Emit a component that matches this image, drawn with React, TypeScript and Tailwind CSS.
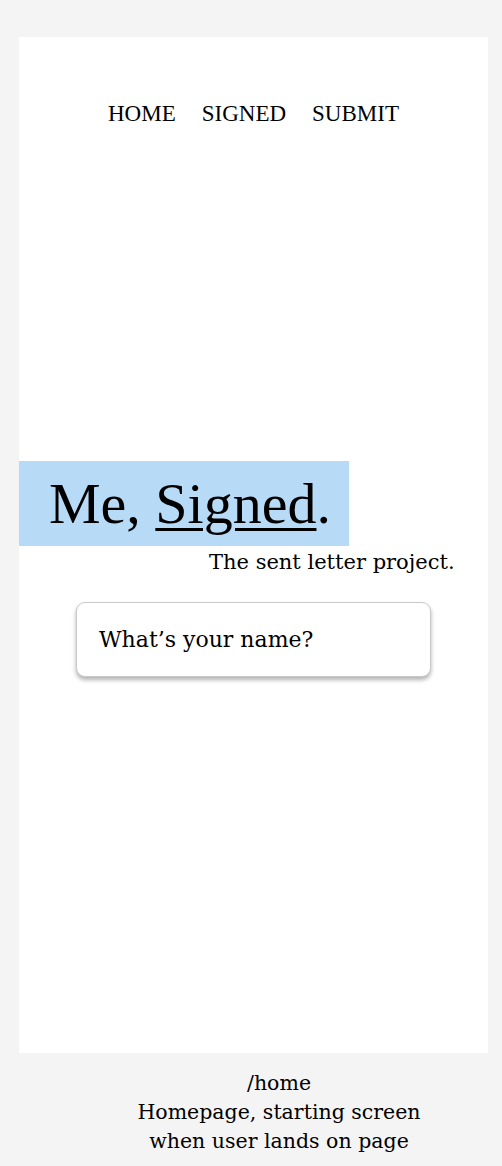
export default function App() {
  const serif = { fontFamily: '"DejaVu Serif", "Liberation Serif", serif' };
  return (
    <div className="min-h-[1166px] w-[502px] overflow-hidden bg-[#f4f4f4] pt-[37px] text-black" style={serif}>
      <div className="ml-[19px] flex h-[1016px] w-[469px] flex-col bg-white">
        <nav
          className="mt-[63px] flex justify-center gap-[26px] text-[23px] leading-[28px]"
          style={{ fontFamily: '"Liberation Serif", serif' }}
        >
          <span>HOME</span>
          <span>SIGNED</span>
          <span>SUBMIT</span>
        </nav>
        <div className="mt-[333px] flex h-[85px] w-[330px] items-center bg-[#b7dbf7] pl-[30px]">
          <h1
            className="whitespace-nowrap text-[58px] leading-none"
            style={{ fontFamily: '"Liberation Serif", serif' }}
          >
            Me, <span className="underline decoration-[3px] underline-offset-[5px]">Signed</span>.
          </h1>
        </div>
        <p className="ml-[190px] mt-[2px] whitespace-nowrap text-[21px] leading-[28px]">The sent letter project.</p>
        <div className="ml-[57px] mt-[26px] flex h-[75px] w-[355px] items-center rounded-[9px] border border-[#c9c9c9] bg-white pl-[22px] text-[22px] shadow-[0_3px_4px_rgba(0,0,0,0.3)]">
          What’s your name?
        </div>
      </div>
      <div className="ml-[28px] mt-[16px] w-[502px] text-center text-[20.5px] leading-[29px]">
        <p>/home</p>
        <p>Homepage, starting screen</p>
        <p>when user lands on page</p>
      </div>
    </div>
  );
}
